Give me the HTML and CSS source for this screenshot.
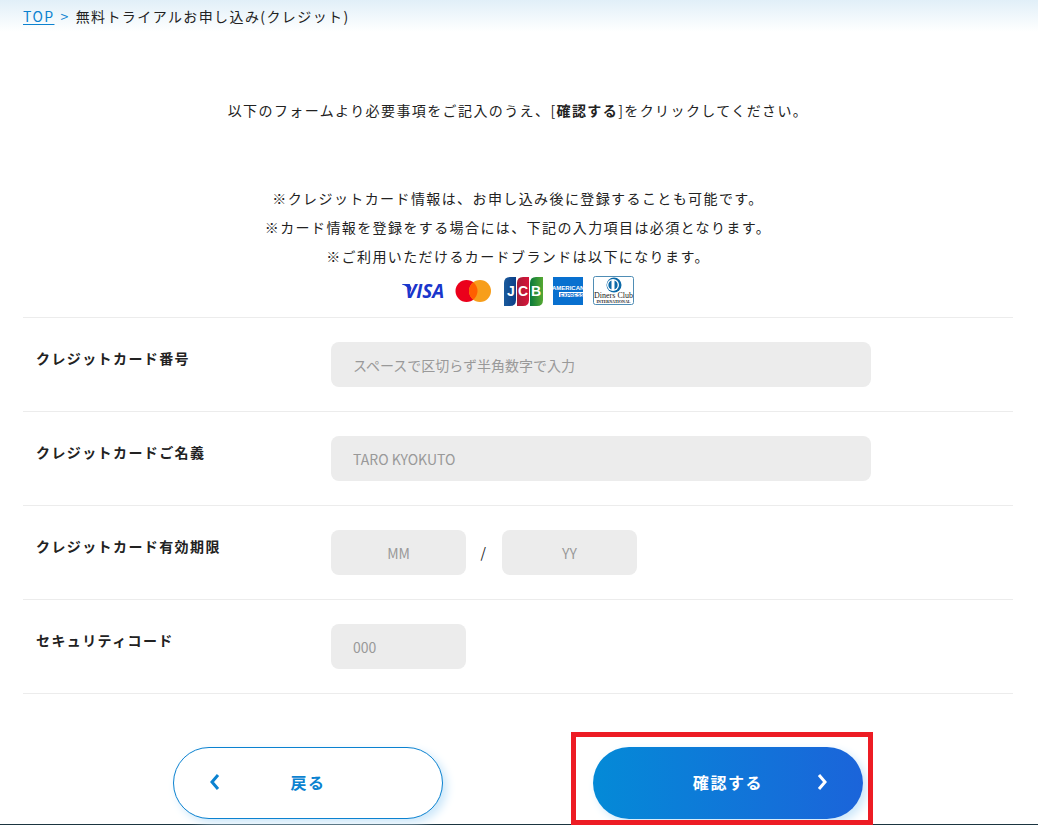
FILE: index.html
```
<!DOCTYPE html>
<html lang="ja">
<head>
    <meta charset="UTF-8">
    <meta name="viewport" content="width=device-width, initial-scale=1">
    <title>無料トライアルお申し込み(クレジット)</title>
    <link rel="stylesheet" href="styles.css">
</head>
<body>
    <main class="page">
        <nav class="breadcrumb">
            <a href="#">TOP</a>
            <span class="separator">&gt;</span>
            <span>無料トライアルお申し込み(クレジット)</span>
        </nav>

        <p class="lead">以下のフォームより必要事項をご記入のうえ、[<strong>確認する</strong>]をクリックしてください。</p>

        <div class="notes">
            <p>※クレジットカード情報は、お申し込み後に登録することも可能です。</p>
            <p>※カード情報を登録をする場合には、下記の入力項目は必須となります。</p>
            <p>※ご利用いただけるカードブランドは以下になります。</p>
        </div>

        <div class="card-brands">
            <svg class="brand" width="43" height="30" viewBox="0 0 43 30" role="img" aria-label="VISA">
                <path d="M0 8h7.500l2 4-1 4C7 12 4 9.500 0 8.500z" fill="#1a36cc"/>
                <text x="3" y="22" class="visa-text">VISA</text>
            </svg>
            <svg class="brand" width="39" height="30" viewBox="0 0 39 30" role="img" aria-label="Mastercard">
                <circle cx="11.500" cy="15" r="11" fill="#eb001b"/>
                <circle cx="25" cy="15" r="11" fill="#f79e1b"/>
                <path d="M18.250 6.300a11 11 0 0 1 0 17.400a11 11 0 0 1 0-17.400z" fill="#ff5f00"/>
            </svg>
            <svg class="brand" width="39" height="30" viewBox="0 0 39 30" role="img" aria-label="JCB">
                <defs>
                    <linearGradient id="jcbBlue"><stop offset="0" stop-color="#1a5a9c"/><stop offset="1" stop-color="#0b3f87"/></linearGradient>
                    <linearGradient id="jcbRed"><stop offset="0" stop-color="#a51c35"/><stop offset="1" stop-color="#d8143a"/></linearGradient>
                    <linearGradient id="jcbGreen"><stop offset="0" stop-color="#0b7a3b"/><stop offset="1" stop-color="#55a832"/></linearGradient>
                </defs>
                <path d="M0 7q0-6 6-6h6v23q0 6-6 6H0z" fill="url(#jcbBlue)"/>
                <path d="M13 7q0-6 6-6h6v23q0 6-6 6h-6z" fill="url(#jcbRed)"/>
                <path d="M26 7q0-6 6-6h7v23q0 6-6 6h-7z" fill="url(#jcbGreen)"/>
                <text x="3 14 27" y="20" class="jcb-text">JCB</text>
            </svg>
            <svg class="brand" width="30" height="30" viewBox="0 0 30 30" role="img" aria-label="American Express">
                <rect y="1" width="30" height="28" fill="#0870cf"/>
                <text x="-1" y="14" class="amex-text">AMERICAN</text>
                <rect x="6" y="16" width="24" height="5" fill="#fff"/>
                <text x="7" y="21" class="amex-text amex-text-inverse">EXPRESS</text>
            </svg>
            <svg class="brand" width="41" height="30" viewBox="0 0 41 30" role="img" aria-label="Diners Club International">
                <rect x=".5" y=".5" width="40" height="28" rx="2" fill="#fff" stroke="#4f8db5"/>
                <circle cx="21" cy="9" r="7.500" fill="#0b69a8"/>
                <circle cx="20" cy="9" r="6" fill="#fff"/>
                <path d="M18.500 4.500a4.800 4.800 0 0 0 0 9zM21.500 4.500a4.800 4.800 0 0 1 0 9z" fill="#0b69a8"/>
                <text x="20.500" y="22" class="diners-text">Diners Club</text>
                <text x="20.500" y="27" class="diners-sub">INTERNATIONAL</text>
            </svg>
        </div>

        <form class="card-form">
            <div class="form-row">
                <label class="form-label" for="cardNumber">クレジットカード番号</label>
                <div class="form-field">
                    <input type="text" id="cardNumber" class="input" placeholder="スペースで区切らず半角数字で入力">
                </div>
            </div>
            <div class="form-row">
                <label class="form-label" for="cardName">クレジットカードご名義</label>
                <div class="form-field">
                    <input type="text" id="cardName" class="input" placeholder="TARO KYOKUTO">
                </div>
            </div>
            <div class="form-row">
                <label class="form-label" for="expMonth">クレジットカード有効期限</label>
                <div class="form-field">
                    <input type="text" id="expMonth" class="input input-short input-center" placeholder="MM">
                    <span class="slash">/</span>
                    <input type="text" id="expYear" class="input input-short input-center" placeholder="YY" aria-label="年">
                </div>
            </div>
            <div class="form-row">
                <label class="form-label" for="securityCode">セキュリティコード</label>
                <div class="form-field">
                    <input type="text" id="securityCode" class="input input-short" placeholder="000">
                </div>
            </div>

            <div class="form-actions">
                <button type="button" class="btn btn-back">
                    <svg class="btn-arrow" width="10" height="16" viewBox="0 0 10 16"><path d="M8 1L2 8l6 7"/></svg>
                    <span>戻る</span>
                </button>
                <div class="highlight">
                    <button type="submit" class="btn btn-confirm">
                        <span>確認する</span>
                        <svg class="btn-arrow" width="10" height="16" viewBox="0 0 10 16"><path d="M2 1l6 7-6 7"/></svg>
                    </button>
                </div>
            </div>
        </form>
    </main>
    <footer class="footer"></footer>
</body>
</html>
```

FILE: styles.css
```
* {
    margin: 0;
    padding: 0;
    box-sizing: border-box;
}

body {
    font-family: "Noto Sans CJK JP", sans-serif;
    font-size: 14px;
    line-height: 29px;
    letter-spacing: 0.1em;
    color: #222;
    background: #fff linear-gradient(#e1eff8, #fff 32px) no-repeat;
}

.page {
    padding: 2px 25px 5px 23px;
}

.breadcrumb {
    display: flex;
    gap: 6px;
}

.breadcrumb a,
.separator {
    color: #0b82d0;
}

.breadcrumb a {
    text-underline-offset: 2px;
}

.lead {
    margin: 65px 0 59px;
    text-align: center;
}

.notes {
    text-align: center;
}

/* card brands */
.card-brands {
    display: flex;
    justify-content: center;
    gap: 10px;
    padding: 5px 0 11px;
}

.brand {
    display: block;
    letter-spacing: 0;
}

.visa-text {
    font: italic bold 19px "Open Sans", sans-serif;
    fill: #1a36cc;
}

.jcb-text {
    font: bold 14px "Liberation Sans", sans-serif;
    fill: #fff;
}

.amex-text {
    font: bold 6px "Liberation Sans", sans-serif;
    fill: #fff;
}

.amex-text-inverse {
    font-size: 5px;
    fill: #0870cf;
}

.diners-text {
    font: 8px "Liberation Serif", serif;
    text-anchor: middle;
    fill: #222;
}

.diners-sub {
    font: bold 4px "Liberation Serif", serif;
    text-anchor: middle;
    fill: #222;
}

/* form */
.card-form {
    border-top: 1px solid #ececec;
}

.form-row {
    display: flex;
    align-items: flex-start;
    padding: 24px 13px;
    border-bottom: 1px solid #ececec;
}

.form-label {
    width: 295px;
    flex-shrink: 0;
    padding-top: 2px;
    font-weight: bold;
}

.form-field {
    flex: 1;
    display: flex;
    align-items: center;
}

.input {
    width: 100%;
    max-width: 540px;
    height: 45px;
    padding: 0 22px;
    border: none;
    border-radius: 8px;
    background: #ececec;
    font-family: inherit;
    font-size: 14px;
    color: #222;
}

.input::placeholder {
    color: #999;
}

.input-short {
    width: 135px;
}

.input-center {
    text-align: center;
}

.slash {
    width: 36px;
    text-align: center;
}

/* buttons */
.form-actions {
    display: flex;
    justify-content: center;
    gap: 150px;
    padding-top: 53px;
}

.btn {
    position: relative;
    width: 270px;
    height: 72px;
    padding-bottom: 2px;
    border: none;
    border-radius: 36px;
    box-shadow: 4px 4px 10px #cbe7fa;
    font-family: inherit;
    font-size: 16px;
    font-weight: bold;
    letter-spacing: 0.1em;
    cursor: pointer;
}

.btn-back {
    border: 1px solid #0b82d0;
    background: #fff;
    color: #0b82d0;
}

.btn-confirm {
    display: block;
    background: linear-gradient(90deg, #048ad7, #1b64da);
    color: #fff;
}

.btn-arrow {
    position: absolute;
    top: 50%;
    margin-top: -9px;
    fill: none;
    stroke: currentColor;
    stroke-width: 3;
}

.btn-back .btn-arrow {
    left: 36px;
}

.btn-confirm .btn-arrow {
    right: 36px;
}

.highlight {
    position: relative;
}

.highlight::after {
    content: '';
    position: absolute;
    inset: -15px -10px -6px -22px;
    border: 5px solid #ed1c24;
    pointer-events: none;
}

.footer {
    height: 1px;
    background: #1b3540;
}
```
